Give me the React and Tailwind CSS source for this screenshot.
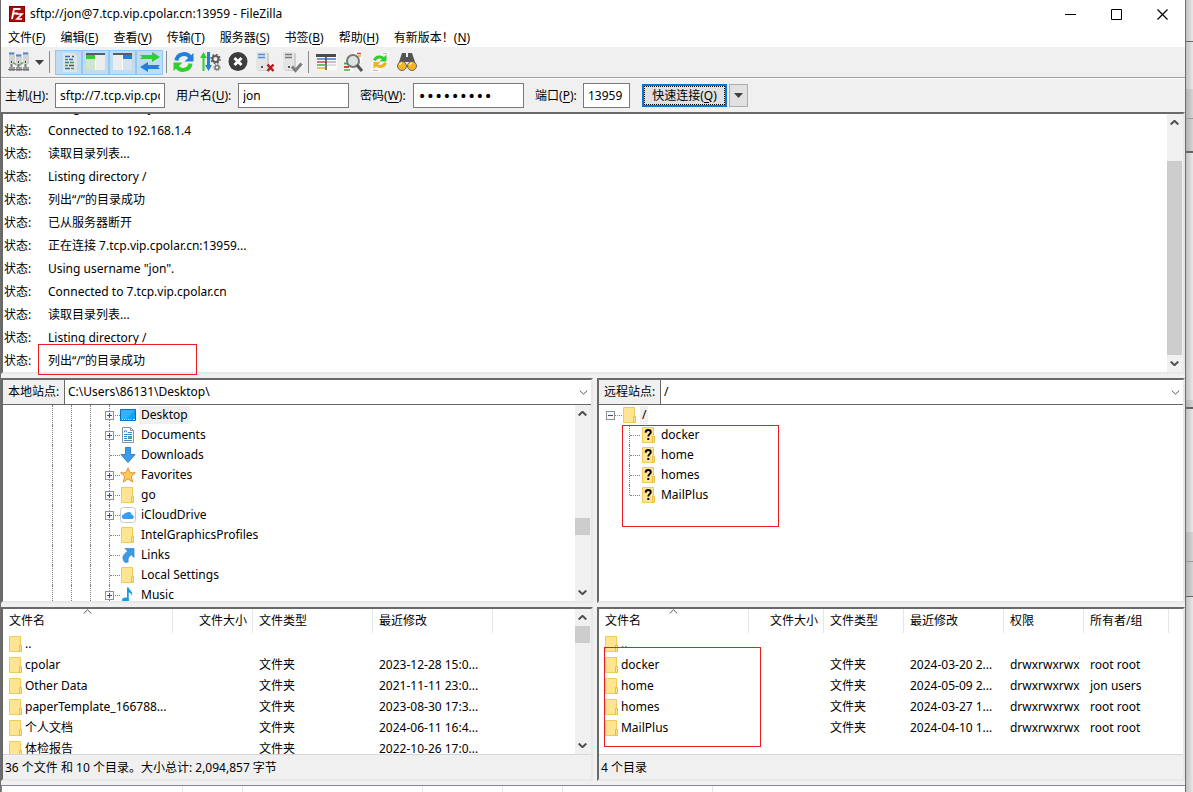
import { useState } from "react";

const LOG_LINES = [
  'Using username "jon".',
  "Connected to 192.168.1.4",
  "读取目录列表...",
  "Listing directory /",
  "列出“/”的目录成功",
  "已从服务器断开",
  "正在连接 7.tcp.vip.cpolar.cn:13959...",
  'Using username "jon".',
  "Connected to 7.tcp.vip.cpolar.cn",
  "读取目录列表...",
  "Listing directory /",
  "列出“/”的目录成功",
];

const MENU = [
  ["文件", "F"],
  ["编辑", "E"],
  ["查看", "V"],
  ["传输", "T"],
  ["服务器", "S"],
  ["书签", "B"],
  ["帮助", "H"],
  ["有新版本！", "N"],
];

const LOCAL_TREE = [
  { name: "Desktop", icon: "desktop", expand: true, selected: true },
  { name: "Documents", icon: "documents", expand: true },
  { name: "Downloads", icon: "downloads" },
  { name: "Favorites", icon: "star", expand: true },
  { name: "go", icon: "folder", expand: true },
  { name: "iCloudDrive", icon: "cloud", expand: true },
  { name: "IntelGraphicsProfiles", icon: "folder" },
  { name: "Links", icon: "link" },
  { name: "Local Settings", icon: "folder" },
  { name: "Music", icon: "music", expand: true },
];

const REMOTE_TREE = ["docker", "home", "homes", "MailPlus"];

const LOCAL_COLUMNS = [
  { label: "文件名", width: "w-[170px]" },
  { label: "文件大小", width: "w-[80px]", right: true },
  { label: "文件类型", width: "w-[120px]" },
  { label: "最近修改", width: "w-[120px]" },
];

const LOCAL_FILES = [
  ["..", "", "", ""],
  ["cpolar", "", "文件夹", "2023-12-28 15:0..."],
  ["Other Data", "", "文件夹", "2021-11-11 23:0..."],
  ["paperTemplate_166788...", "", "文件夹", "2023-08-30 17:3..."],
  ["个人文档", "", "文件夹", "2024-06-11 16:4..."],
  ["体检报告", "", "文件夹", "2022-10-26 17:0..."],
];

const REMOTE_COLUMNS = [
  { label: "文件名", width: "w-[150px]" },
  { label: "文件大小", width: "w-[75px]", right: true },
  { label: "文件类型", width: "w-[80px]" },
  { label: "最近修改", width: "w-[100px]" },
  { label: "权限", width: "w-[80px]" },
  { label: "所有者/组", width: "w-[85px]" },
];

const REMOTE_FILES = [
  ["..", "", "", "", "", ""],
  ["docker", "", "文件夹", "2024-03-20 2...", "drwxrwxrwx", "root root"],
  ["home", "", "文件夹", "2024-05-09 2...", "drwxrwxrwx", "jon users"],
  ["homes", "", "文件夹", "2024-03-27 1...", "drwxrwxrwx", "root root"],
  ["MailPlus", "", "文件夹", "2024-04-10 1...", "drwxrwxrwx", "root root"],
];

const SUNKEN = "border-2 border-t-[#696969] border-l-[#696969] border-r-[#e8e8e8] border-b-[#e8e8e8]";

/* ---------- small icons ---------- */

function Folder({ unknown }) {
  return (
    <svg className="h-4 w-4 shrink-0" viewBox="0 0 16 16">
      <path d="M1.5.5h11v15h-11z" fill="#ffe591" stroke="#efcb58" />
      <path d="M11.5 9.5h2v6h-2z" fill="#ffe591" stroke="#e8bf45" />
      {unknown && (
        <path
          d="M4.600 5.600C4.700 3.900 5.700 3 7.200 3c1.600 0 2.600.9 2.600 2.200 0 1.900-2.500 2-2.500 4.300M7.300 11v2"
          fill="none"
          stroke="#000"
          strokeWidth="1.900"
        />
      )}
    </svg>
  );
}

function TreeIcon({ name }) {
  if (name === "folder") return <Folder />;
  return (
    <svg className="h-4 w-4 shrink-0" viewBox="0 0 16 16">
      {name === "desktop" && (
        <>
          <path d="M.5 2.500h15v11H.5z" fill="#14a0f5" stroke="#0a6fc0" />
          <path d="M1 3h14L6 12H1z" fill="#33b3ff" />
          <path d="M2 12.500h10" stroke="#bfe6ff" strokeDasharray="1 1" />
          <path d="M13 12.500h2" stroke="#fff" />
        </>
      )}
      {name === "documents" && (
        <>
          <path d="M2.500.5h8l3 3v12h-11z" fill="#fff" stroke="#8d9299" />
          <path d="M10.500.5v3h3" fill="none" stroke="#8d9299" />
          <path d="M4 5.500l1.500-2.500L7 5.500M8 5.500h4M4 7.500h8M4 9.500h3M4 11.500h3M4 13.500h8" fill="none" stroke="#2d8fd8" />
          <path d="M8 9h4v3H8z" fill="#5c9e8c" />
        </>
      )}
      {name === "downloads" && (
        <path d="M5.500.5h5v7H15L8 15.500 1 7.500h4.500z" fill="#3c9ae8" stroke="#2f82cd" />
      )}
      {name === "star" && (
        <path d="M8 .8l2.100 5h5.300l-4.200 3.500 1.600 5.800L8 11.900l-4.800 3.200 1.600-5.800L.6 5.800h5.300z" fill="#ffc95c" stroke="#e0923a" />
      )}
      {name === "cloud" && (
        <>
          <rect x=".5" y=".5" width="15" height="15" rx="3" fill="#fff" stroke="#c4c8cd" />
          <path d="M4 12a2.200 2.200 0 010-4.400 2 2 0 012.300-1.800 3.200 3.200 0 015.400 2A2.200 2.200 0 0112.500 12z" fill="#3a9cf5" />
        </>
      )}
      {name === "link" && (
        <path d="M5 1.500h9v9l-2.800-2.800C8.500 9.500 7.500 12 8.200 15L5 15.500C1.500 11.500 2.500 7.500 7.800 4.300z" fill="#3c9ae8" stroke="#2f82cd" strokeWidth=".7" />
      )}
      {name === "music" && (
        <>
          <path d="M7 .5h1.700c.3 2.700 4.800 3.800 3.300 8.500-.3-2-1.300-3-3.300-3.500v8H7z" fill="#109cf0" />
          <ellipse cx="5.500" cy="13" rx="3.500" ry="2.500" fill="#109cf0" />
        </>
      )}
    </svg>
  );
}

function Chevron({ up, thin }) {
  return (
    <svg className="h-[5px] w-[9px]" viewBox="0 0 9 5">
      <path
        d={up ? "M.7 4.500L4.500.8l3.800 3.700" : "M.7.5l3.800 3.700L8.300.5"}
        fill="none"
        stroke={thin ? "#555" : "#505050"}
        strokeWidth={thin ? 1 : 2}
      />
    </svg>
  );
}

function Triangle() {
  return (
    <svg className="h-[5px] w-[9px]" viewBox="0 0 9 5">
      <path d="M0 0h9L4.500 5z" fill="#404040" />
    </svg>
  );
}

/* ---------- toolbar icons, all on a 24px grid ---------- */

const server = (x, y, bar) => (
  <g transform={`translate(${x} ${y})`}>
    <path d="M0 0h11v18H0z" fill="#e4e4e4" />
    <path d="M11 1h2v18H2v-1h9z" fill="#cfcfcf" />
    <path d="M2 2.500h7M2 5.500h7" stroke={bar} strokeWidth="1.500" />
    <path d="M5 14h2v2H5z" fill="#555" />
  </g>
);

const TOOL_ICONS = {
  sites: (
    <>
      {[2, 9, 16].map((x, i) => (
        <g key={x}>
          <path d={`M${x} ${i === 1 ? 4 : 2}h6v12h-6z`} fill="#d3d3d3" />
          <path d={`M${x} ${i === 1 ? 5.5 : 3.5}h5`} stroke="#4a90d0" strokeWidth="2" />
          <path d={`M${x + 2} 11h1v2h-1z`} fill="#444" />
          <path d={`M${x + 2.5} 14v4`} stroke="#777" strokeWidth="2" />
          <path d={`M${x} 17h6v4h-6z`} fill="#9a9a9a" />
        </g>
      ))}
      <path d="M1 19.500h21" stroke="#777" />
      <path d="M6 12.500l3 2M13 14.500l3-2" stroke="#36b336" strokeWidth="1.500" />
    </>
  ),
  log: (
    <>
      <path d="M6 3h11l3 3v16H6z" fill="#dfe4e8" />
      <path d="M8 6.500h5M12 9.500h4M8 12.500h4M8 18.500h5" stroke="#2f6fb0" strokeWidth="1.500" />
      <path d="M8 9.500h3M13 12.500h4M8 15.500h3M14 18.500h3" stroke="#3f9f3f" strokeWidth="1.500" />
      <path d="M15 6.500h2M12 15.500h5" stroke="#555" strokeWidth="1.500" />
    </>
  ),
  localTree: (
    <>
      <path d="M2 3h19v17H2z" fill="#eceeed" />
      <path d="M2 3h19v2H2z" fill="#5c5c5c" />
      <path d="M2 5h9v4H2z" fill="#2fcf2f" />
      <path d="M2 9h9v11H2z" fill="#cde6cd" />
      <path d="M11.500 5v15" stroke="#fff" />
    </>
  ),
  remoteTree: (
    <>
      <path d="M2 3h19v17H2z" fill="#eceeed" />
      <path d="M2 3h19v2H2z" fill="#5c5c5c" />
      <path d="M12 5h9v4h-9z" fill="#2080dc" />
      <path d="M12 9h9v11h-9z" fill="#d6e3ee" />
      <path d="M11.500 5v15" stroke="#fff" />
    </>
  ),
  queue: (
    <>
      <path d="M2 5h12V2l8 5-8 5V9H2l2-2z" fill="#2fcf2f" />
      <path d="M22 15H10v-3l-8 5 8 5v-3h12l-2-2z" fill="#2080dc" />
    </>
  ),
  refresh: (
    <>
      <path d="M4.500 10.500A7.500 7 0 0118 7" fill="none" stroke="#2080dc" strokeWidth="4" />
      <path d="M21.500 3v8.500h-9z" fill="#2080dc" />
      <path d="M18.500 13.500A7.500 7 0 015 17" fill="none" stroke="#2fcf2f" strokeWidth="4" />
      <path d="M1.500 21v-8.500h9z" fill="#2fcf2f" />
    </>
  ),
  process: (
    <>
      <path d="M4.500 21V5" stroke="#2fcf2f" strokeWidth="2" />
      <path d="M1 8h7L4.500 2z" fill="#2fcf2f" />
      <path d="M9.500 2v14" stroke="#2080dc" strokeWidth="3" />
      <path d="M6 15h7l-3.500 6z" fill="#2080dc" />
      <circle cx="16.500" cy="9" r="3" fill="none" stroke="#5d5d5d" strokeWidth="2" />
      <circle cx="16.500" cy="9" r="4.500" fill="none" stroke="#5d5d5d" strokeWidth="1.500" strokeDasharray="1.700 1.800" />
      <circle cx="18" cy="17.500" r="2" fill="none" stroke="#777" strokeWidth="1.500" />
      <circle cx="18" cy="17.500" r="3.200" fill="none" stroke="#777" strokeDasharray="1.200 1.300" />
    </>
  ),
  cancel: (
    <>
      <circle cx="12" cy="11.500" r="9.500" fill="#3d3d3d" />
      <path d="M8.500 8l7 7M15.500 8l-7 7" stroke="#fff" strokeWidth="3" />
    </>
  ),
  disconnect: (
    <>
      {server(3, 2, "#4a90d0")}
      <path d="M14.500 14.500l6 6.500M20.500 14.500l-6 6.500" stroke="#b81c1c" strokeWidth="2.500" />
    </>
  ),
  reconnect: (
    <>
      {server(3, 2, "#777")}
      <path d="M12 16.500l3.500 4 6-7" fill="none" stroke="#7d7d7d" strokeWidth="3" />
    </>
  ),
  filter: (
    <>
      <path d="M3 4h20v16H3z" fill="#fafafa" />
      <path d="M2 4h20v3H2z" fill="#4b4b4b" />
      <path d="M3 9h19" stroke="#2f7fd0" strokeWidth="1.500" />
      <path d="M3 12h19" stroke="#d84040" strokeWidth="1.500" />
      <path d="M3 15h8" stroke="#36b336" strokeWidth="1.500" />
      <path d="M3 18h8" stroke="#e9b020" strokeWidth="1.500" />
      <path d="M13 12h9M13 15h9" stroke="#d4d4d4" strokeWidth="1.500" />
      <path d="M12 4v16" stroke="#4b4b4b" strokeWidth="1.500" />
    </>
  ),
  compare: (
    <>
      <path d="M13 1h8v11h-8zM3 12h9v10H3z" fill="#fafafa" />
      <path d="M16 3.500h4" stroke="#d84040" strokeWidth="1.500" />
      <path d="M17 6h3" stroke="#e9b020" strokeWidth="1.500" />
      <path d="M3 13.500h4" stroke="#36b336" strokeWidth="2" />
      <path d="M3 17h5" stroke="#d84040" strokeWidth="2" />
      <path d="M3 20h6" stroke="#36b336" strokeWidth="1.500" />
      <circle cx="12" cy="11" r="6" fill="#dfe2e4" stroke="#777" strokeWidth="2" />
      <path d="M16 15l5 6" stroke="#555" strokeWidth="3" />
    </>
  ),
  sync: (
    <>
      <path d="M13 2h8v11h-8zM3 12h10v10H3z" fill="#fafafa" />
      <path d="M15 3.500h4M5 20.500h5" stroke="#dcaaaa" />
      <path d="M6.500 10.500a5.500 5.500 0 019-2" fill="none" stroke="#2fcf2f" strokeWidth="3" />
      <path d="M18.500 4.500v7h-7z" fill="#2fcf2f" />
      <path d="M17.500 12.500a5.500 5.500 0 01-9 2.500" fill="none" stroke="#f0b020" strokeWidth="3" />
      <path d="M5.500 19v-7h7z" fill="#f0b020" />
    </>
  ),
  find: (
    <>
      <path d="M7 3h4v4h2V3h4l4 12h-7v-3h-4v3H3z" fill="#555" />
      <circle cx="7" cy="16" r="4.500" fill="#f5b520" stroke="#666" />
      <circle cx="17" cy="16" r="4.500" fill="#f5b520" stroke="#666" />
      <path d="M4.500 15a3 3 0 012.500-2M14.500 15a3 3 0 012.500-2" fill="none" stroke="#ffe9a8" strokeWidth="1.500" />
    </>
  ),
};

function ToolButton({ icon, label, toggle }) {
  const [on, setOn] = useState(true);
  return (
    <button
      type="button"
      aria-label={label}
      aria-pressed={toggle ? on : undefined}
      onClick={() => toggle && setOn(!on)}
      className={
        "flex h-[25px] w-[27px] items-center justify-center " +
        (toggle && on ? "border border-[#90c8f6] bg-[#c0dcf3]" : "")
      }
    >
      <svg className="h-6 w-6 shrink-0" viewBox="0 0 24 24">{TOOL_ICONS[icon]}</svg>
    </button>
  );
}

function Separator() {
  return <div className="mx-[3px] h-[22px] w-px bg-[#8c8c8c]" />;
}

/* ---------- window parts ---------- */

function TitleBar() {
  return (
    <header className="flex h-7 items-center bg-white pl-2">
      <svg className="h-4 w-4" viewBox="0 0 16 16">
        <rect width="16" height="16" fill="#b00a0a" />
        <rect x=".5" y=".5" width="15" height="15" fill="none" stroke="#8a0000" />
        <path d="M3 13L5 3h6.500M4.200 7.500H9" fill="none" stroke="#fff" strokeWidth="1.800" />
        <path d="M7.500 8H13l-5 5h5" fill="none" stroke="#fff" strokeWidth="1.600" />
      </svg>
      <h1 className="ml-[5px] grow">sftp://jon@7.tcp.vip.cpolar.cn:13959 - FileZilla</h1>
      <button type="button" aria-label="最小化" className="flex h-7 w-[46px] items-center justify-center">
        <svg className="h-[11px] w-[11px]" viewBox="0 0 11 11"><path d="M0 5.500h11" stroke="#000" /></svg>
      </button>
      <button type="button" aria-label="最大化" className="flex h-7 w-[46px] items-center justify-center">
        <svg className="h-[11px] w-[11px]" viewBox="0 0 11 11"><path d="M.5.5h10v10H.5z" fill="none" stroke="#000" /></svg>
      </button>
      <button type="button" aria-label="关闭" className="flex h-7 w-[46px] items-center justify-center">
        <svg className="h-[11px] w-[11px]" viewBox="0 0 11 11"><path d="M.5.5l10 10M10.500.5l-10 10" stroke="#000" strokeWidth="1.200" /></svg>
      </button>
    </header>
  );
}

function MenuBar() {
  return (
    <nav className="flex h-[19px] items-end gap-[15px] bg-white pl-[7px]">
      {MENU.map(([text, key]) => (
        <button key={key} type="button" className="whitespace-nowrap">
          {text}(<u className="underline-offset-2">{key}</u>)
        </button>
      ))}
    </nav>
  );
}

function ToolBar() {
  return (
    <div className="flex h-[31px] items-center border-b border-[#a0a0a0] pl-1">
      <ToolButton icon="sites" label="站点管理器" />
      <button type="button" aria-label="站点列表" className="flex h-6 w-[14px] items-center justify-center">
        <Triangle />
      </button>
      <Separator />
      <div className="flex pl-[2px]">
        <ToolButton toggle icon="log" label="消息日志" />
        <ToolButton toggle icon="localTree" label="本地目录树" />
        <ToolButton toggle icon="remoteTree" label="远程目录树" />
        <ToolButton toggle icon="queue" label="传输队列" />
      </div>
      <Separator />
      <ToolButton icon="refresh" label="刷新" />
      <ToolButton icon="process" label="处理队列" />
      <ToolButton icon="cancel" label="取消" />
      <ToolButton icon="disconnect" label="断开" />
      <ToolButton icon="reconnect" label="重新连接" />
      <Separator />
      <ToolButton icon="filter" label="过滤器" />
      <ToolButton icon="compare" label="目录对比" />
      <ToolButton icon="sync" label="同步浏览" />
      <ToolButton icon="find" label="搜索" />
    </div>
  );
}

function Field({ id, text, hotkey, type = "text", value, labelWidth, inputStyle }) {
  return (
    <div className="flex items-center">
      <label htmlFor={id} className={"whitespace-nowrap " + labelWidth}>
        {text}(<u className="underline-offset-2">{hotkey}</u>):
      </label>
      <input
        id={id}
        type={type}
        defaultValue={value}
        className={"h-[25px] border border-[#7a7a7a] bg-white px-1 outline-none " + inputStyle}
      />
    </div>
  );
}

function QuickConnect() {
  return (
    <form className="flex h-[34px] items-center gap-[11px] border-t border-white pl-1" onSubmit={(e) => e.preventDefault()}>
      <Field id="host" text="主机" hotkey="H" value="sftp://7.tcp.vip.cpolar.cn" labelWidth="w-[50px]" inputStyle="w-[110px]" />
      <Field id="user" text="用户名" hotkey="U" value="jon" labelWidth="w-[62px]" inputStyle="w-[111px]" />
      <Field id="pass" text="密码" hotkey="W" type="password" value="secret123" labelWidth="w-[53px]" inputStyle="w-[111px] font-['DejaVu_Sans',sans-serif] text-[14px]" />
      <Field id="port" text="端口" hotkey="P" value="13959" labelWidth="w-[48px]" inputStyle="w-[47px]" />
      <div className="flex gap-[2px] pl-px">
        <button type="submit" className="h-[23px] w-[85px] border-2 border-[#0078d7] bg-[#e1e1e1]">
          <span className="flex h-full items-center justify-center whitespace-nowrap border border-dotted border-black">
            快速连接(<u className="underline-offset-2">Q</u>)
          </span>
        </button>
        <button type="button" aria-label="历史记录" className="flex h-[23px] w-[19px] items-center justify-center border border-[#adadad] bg-[#e1e1e1]">
          <Triangle />
        </button>
      </div>
    </form>
  );
}

function ScrollBar({ before, thumb }) {
  return (
    <div className="flex w-4 shrink-0 flex-col bg-[#f0f0f0]">
      <div className="flex h-[17px] shrink-0 items-center justify-center pr-px"><Chevron up /></div>
      <div className={before} />
      <div className={"mr-px bg-[#cdcdcd] " + thumb} />
      <div className="grow" />
      <div className="flex h-[17px] shrink-0 items-center justify-center pr-px"><Chevron /></div>
    </div>
  );
}

function MessageLog() {
  return (
    <section className={"relative flex h-[262px] bg-white " + SUNKEN}>
      <div className="flex grow flex-col justify-end overflow-hidden">
        {LOG_LINES.map((line, i) => (
          <p key={i} className="flex h-[23px] shrink-0 items-center whitespace-nowrap pl-px">
            <span className="w-11">状态:</span>
            {line}
          </p>
        ))}
      </div>
      <ScrollBar before="h-[30px]" thumb="h-[194px]" />
      <div className="absolute top-[230px] left-[35px] h-[31px] w-[159px] border border-[#ed1c24]" />
    </section>
  );
}

function AddressBar({ id, label, path }) {
  return (
    <div className="flex h-[25px] border-b border-[#696969]">
      <label htmlFor={id} className="flex w-[62px] items-center whitespace-nowrap border-r border-[#696969] bg-[#f0f0f0] pl-[5px]">
        {label}
      </label>
      <div className="relative grow">
        <select id={id} className="h-full w-full appearance-none bg-white pl-[3px] outline-none">
          <option>{path}</option>
        </select>
        <span className="pointer-events-none absolute top-[10px] right-[3px]"><Chevron thin /></span>
      </div>
    </div>
  );
}

function Expander({ open }) {
  return (
    <button
      type="button"
      aria-label={open ? "折叠" : "展开"}
      className="flex h-[9px] w-[9px] items-center justify-center border border-[#919191] bg-[#f8f8f8]"
    >
      <svg className="h-[5px] w-[5px] shrink-0" viewBox="0 0 5 5">
        <path d={open ? "M0 2.500h5" : "M0 2.500h5M2.500 0v5"} stroke="#3b4f93" />
      </svg>
    </button>
  );
}

function Guide() {
  return <span className="h-5 w-[19px] shrink-0 border-l border-dotted border-[#808080]" />;
}

function LocalTree() {
  return (
    <div className="flex h-[196px]">
      <ul className="grow overflow-hidden pl-[49px]">
        {LOCAL_TREE.map((node) => (
          <li key={node.name} className="flex h-5 items-center">
            <Guide />
            <Guide />
            <Guide />
            <span className="relative flex h-5 w-[11px] shrink-0 items-center border-l border-dotted border-[#808080]">
              <span className="w-full border-t border-dotted border-[#808080]" />
              {node.expand && <span className="absolute top-[6px] -left-[5px]"><Expander /></span>}
            </span>
            <TreeIcon name={node.icon} />
            <span className={"ml-[3px] px-[2px] " + (node.selected ? "bg-[#f0f0f0]" : "")}>{node.name}</span>
          </li>
        ))}
      </ul>
      <ScrollBar before="h-[96px]" thumb="h-[17px]" />
    </div>
  );
}

function RemoteTree() {
  return (
    <div className="relative h-[196px] overflow-hidden">
      <div className="flex h-5 items-center pl-[7px]">
        <Expander open />
        <span className="w-[7px] border-t border-dotted border-[#808080]" />
        <Folder />
        <span className="ml-[2px] bg-[#f0f0f0] px-[2px]">/</span>
      </div>
      <ul className="pl-[30px]">
        {REMOTE_TREE.map((name, i) => (
          <li key={name} className="flex h-5 items-center">
            <span
              className={
                "w-px self-start border-l border-dotted border-[#808080] " +
                (i === REMOTE_TREE.length - 1 ? "h-[10px]" : "h-5")
              }
            />
            <span className="mr-px w-[10px] border-t border-dotted border-[#808080]" />
            <Folder unknown />
            <span className="ml-1">{name}</span>
          </li>
        ))}
      </ul>
      <div className="absolute top-5 left-[23px] h-[102px] w-[157px] border border-[#ed1c24]" />
    </div>
  );
}

function FileTable({ columns, files }) {
  return (
    <table className="w-full table-fixed border-separate border-spacing-0 text-left">
      <thead>
        <tr>
          {columns.map((col, i) => (
            <th
              key={col.label}
              className={
                "relative h-6 border-r border-[#e5e5e5] p-0 pl-[6px] font-normal whitespace-nowrap " +
                col.width + (col.right ? " pr-[5px] text-right" : "")
              }
            >
              {col.label}
              {i === 0 && (
                <span className="absolute inset-x-0 top-0 flex justify-center">
                  <Chevron up thin />
                </span>
              )}
            </th>
          ))}
          <td />
        </tr>
      </thead>
      <tbody>
        {files.map((file) => (
          <tr key={file[0]}>
            {file.map((cell, i) => (
              <td key={i} className="h-[21px] p-0 pl-[6px] whitespace-nowrap">
                {i === 0 ? (
                  <span className="-ml-px flex items-center gap-px">
                    <Folder />
                    {cell}
                  </span>
                ) : (
                  cell
                )}
              </td>
            ))}
            <td />
          </tr>
        ))}
      </tbody>
    </table>
  );
}

function StatusLine({ children }) {
  return (
    <p className="flex h-[25px] items-center border-t border-[#d7d7d7] bg-[#f0f0f0] pt-[2px] pl-[2px]">{children}</p>
  );
}

function Backdrop() {
  return (
    <div className="flex w-[7px] shrink-0 flex-col bg-linear-to-r from-[#c2c2c2] to-[#e8e8e8]">
      <div className="h-[42px] border-b border-[#666]" />
      <div className="h-[47px]" />
      <div className="h-[30px] border-b border-[#999] bg-black/8" />
      <div className="h-[34px] border-b-2 border-[#666] bg-black/8" />
      <div className="h-[247px]" />
      <div className="h-[9px] border-b-2 border-[#666] bg-black/8" />
      <div className="h-[123px]" />
      <div className="h-[30px] border-b border-[#999] bg-black/8" />
      <div className="h-[35px] border-b border-[#666] bg-black/8" />
    </div>
  );
}

export default function App() {
  return (
    <div className="flex font-['Noto_Sans','Noto_Sans_CJK_SC',sans-serif] text-[12px] leading-[18px] text-black">
      <main className="min-w-0 grow border-r border-l border-[#6e6e6e] bg-[#f0f0f0]">
        <TitleBar />
        <MenuBar />
        <ToolBar />
        <QuickConnect />
        <MessageLog />

        <div className="mt-1 flex gap-1">
          <section className={"min-w-0 flex-[592] bg-white " + SUNKEN}>
            <AddressBar id="local-path" label="本地站点:" path="C:\Users\86131\Desktop\" />
            <LocalTree />
          </section>
          <section className={"min-w-0 flex-[588] bg-white " + SUNKEN}>
            <AddressBar id="remote-path" label="远程站点:" path="/" />
            <RemoteTree />
          </section>
        </div>

        <div className="mt-1 flex gap-1">
          <section className={"min-w-0 flex-[592] bg-white " + SUNKEN}>
            <div className="flex h-[145px]">
              <div className="grow overflow-hidden">
                <FileTable columns={LOCAL_COLUMNS} files={LOCAL_FILES} />
              </div>
              <ScrollBar before="h-0" thumb="h-[17px]" />
            </div>
            <StatusLine>36 个文件 和 10 个目录。大小总计: 2,094,857 字节</StatusLine>
          </section>
          <section className={"min-w-0 flex-[588] bg-white " + SUNKEN}>
            <div className="relative h-[145px]">
              <FileTable columns={REMOTE_COLUMNS} files={REMOTE_FILES} />
              <div className="absolute top-[38px] left-[5px] h-[100px] w-[157px] border border-[#ed1c24]" />
            </div>
            <StatusLine>4 个目录</StatusLine>
          </section>
        </div>

        <div className="mt-1 flex h-[7px] border-t border-l border-[#828790] bg-white">
          <div className="w-[181px] border-r border-[#e5e5e5]" />
          <div className="w-[60px] border-r border-[#e5e5e5]" />
          <div className="w-[180px] border-r border-[#e5e5e5]" />
          <div className="w-[80px] border-r border-[#e5e5e5]" />
          <div className="w-[60px] border-r border-[#e5e5e5]" />
          <div className="w-[150px] border-r border-[#e5e5e5]" />
        </div>
      </main>
      <Backdrop />
    </div>
  );
}
